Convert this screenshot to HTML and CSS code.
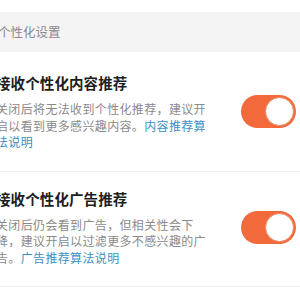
FILE: index.html
```html
<!DOCTYPE html>
<html lang="zh-CN">
<head>
<meta charset="utf-8">
<link rel="stylesheet" href="styles.css">
</head>
<body>
<div class="page">
  <div class="section-head">个性化设置</div>
  <div class="item item-first">
    <div class="text">
      <div class="title">接收个性化内容推荐</div>
      <div class="desc">关闭后将无法收到个性化推荐，建议开启以看到更多感兴趣内容。<span class="link">内容推荐算法说明</span></div>
    </div>
    <div class="toggle"><div class="knob"></div></div>
  </div>
  <div class="item">
    <div class="text">
      <div class="title">接收个性化广告推荐</div>
      <div class="desc">关闭后仍会看到广告，但相关性会下降，建议开启以过滤更多不感兴趣的广告。<span class="link">广告推荐算法说明</span></div>
    </div>
    <div class="toggle"><div class="knob"></div></div>
  </div>
</div>
</body>
</html>
```
FILE: styles.css
```css
html, body {
  margin: 0;
  padding: 0;
  background: #ffffff;
  overflow: hidden;
}
body {
  font-family: "Noto Sans CJK SC", "Noto Sans", sans-serif;
}
.page {
  margin-left: -4px;
  padding-top: 12px;
  width: 304px;
}
.section-head {
  background: #f4f4f4;
  height: 40px;
  line-height: 40px;
  font-size: 12.5px;
  color: #8a8a8a;
  padding-left: 2px;
  margin-left: 4px;
  padding-left: 0;
  text-indent: -2px;
}
.item {
  display: flex;
  align-items: center;
  justify-content: space-between;
  padding: 17px 4px 20px 0;
  border-bottom: 1px solid #ededed;
  margin-left: 4px;
  padding-left: 0;
}
.item-first {
  padding-top: 21px;
}
.text {
  width: 214px;
  margin-left: -4px;
}
.title {
  font-size: 14.5px;
  font-weight: bold;
  color: #1e1e1e;
  line-height: 20px;
  letter-spacing: 0.1px;
}
.desc {
  margin-top: 8px;
  font-size: 12px;
  letter-spacing: 0.35px;
  line-height: 16.5px;
  color: #8a8a8a;
}
.link {
  color: #3b8fc4;
}
.toggle {
  width: 55px;
  height: 33px;
  border-radius: 17px;
  background: #f26a3b;
  display: flex;
  align-items: center;
  justify-content: flex-end;
  padding-right: 2px;
  box-sizing: border-box;
  margin-right: 0;
}
.knob {
  width: 29px;
  height: 29px;
  border-radius: 50%;
  background: #ffffff;
  border: 1px solid #e88a66;
  box-sizing: border-box;
}
```
